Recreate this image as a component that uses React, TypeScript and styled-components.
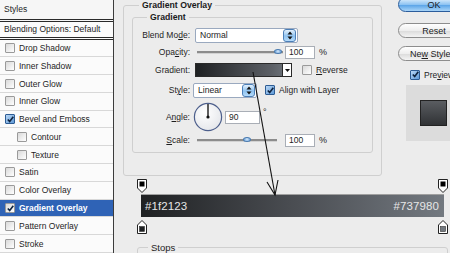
import styled, { createGlobalStyle } from 'styled-components';

const GlobalStyle = createGlobalStyle`
  body {
    margin: 0;
    background: #ececec;
    font-family: "Liberation Sans", Arial, sans-serif;
  }
`;

type Effect = { name: string; checked?: boolean; indent?: boolean; selected?: boolean };

const effects: Effect[] = [
  { name: 'Drop Shadow' },
  { name: 'Inner Shadow' },
  { name: 'Outer Glow' },
  { name: 'Inner Glow' },
  { name: 'Bevel and Emboss', checked: true },
  { name: 'Contour', indent: true },
  { name: 'Texture', indent: true },
  { name: 'Satin' },
  { name: 'Color Overlay' },
  { name: 'Gradient Overlay', checked: true, selected: true },
  { name: 'Pattern Overlay' },
  { name: 'Stroke' },
];

const CheckMark = () => (
  <svg width="7" height="7" viewBox="0 0 7 7">
    <path d="M0.8 3.4 L2.7 5.6 L6.3 0.8" fill="none" stroke="#10243f" strokeWidth="1.6" />
  </svg>
);

const Box = ({ on, blue }: { on?: boolean; blue?: boolean }) => (
  <CheckBox $blue={blue}>{on && <CheckMark />}</CheckBox>
);

const Marker = ({ up, color }: { up?: boolean; color: string }) => (
  <svg width="10" height="14" viewBox="0 0 10 14">
    {up ? (
      <>
        <path d="M0.5 13.5 H9.5 V5 L5 0.5 L0.5 5 Z" fill="#fff" stroke="#222" />
        <rect x="2.5" y="6.5" width="5" height="5" fill={color} stroke="#333" strokeWidth="0.6" />
      </>
    ) : (
      <>
        <path d="M0.5 0.5 H9.5 V9 L5 13.5 L0.5 9 Z" fill="#fff" stroke="#222" />
        <rect x="2.5" y="2.5" width="5" height="5" fill={color} />
      </>
    )}
  </svg>
);

const Spinner = () => (
  <SpinButton>
    <svg width="6" height="9" viewBox="0 0 6 9">
      <path d="M3 0.5 L5.5 3.5 H0.5 Z M3 8.5 L5.5 5.5 H0.5 Z" fill="#111" />
    </svg>
  </SpinButton>
);

function App() {
  return (
    <>
      <GlobalStyle />
      <Page>
        <Sidebar>
          <SideHeader>Styles</SideHeader>
          <BlendRow>Blending Options: Default</BlendRow>
          {effects.map((e) => (
            <EffectRow key={e.name} $selected={e.selected} $indent={e.indent}>
              <Box on={e.checked} blue={e.checked && !e.selected} />
              <span>{e.name}</span>
            </EffectRow>
          ))}
        </Sidebar>

        <Main>
          <TopRow>
            <OuterSet>
              <Legend>Gradient Overlay</Legend>
              <InnerSet>
                <InnerLegend>Gradient</InnerLegend>
                <FieldRow $h={16}>
                  <Label>Blend Mo<u>d</u>e:</Label>
                  <Select $w={103} $ml={1}>
                    <span>Normal</span>
                    <Spinner />
                  </Select>
                </FieldRow>
                <FieldRow $h={18}>
                  <Label>Opa<u>c</u>ity:</Label>
                  <Slider $w={86}>
                    <Thumb $pos={94} />
                  </Slider>
                  <NumberBox $w={30} $ml={2}>100</NumberBox>
                  <Unit>%</Unit>
                </FieldRow>
                <FieldRow $h={18}>
                  <Label>Gradient:</Label>
                  <GradientPicker>
                    <DropArrow>
                      <svg width="5" height="3" viewBox="0 0 5 3">
                        <path d="M0 0 H5 L2.5 3 Z" fill="#111" />
                      </svg>
                    </DropArrow>
                  </GradientPicker>
                  <CheckLabel $ml={10}>
                    <Box />
                    <span><u>R</u>everse</span>
                  </CheckLabel>
                </FieldRow>
                <FieldRow $h={22}>
                  <Label>St<u>y</u>le:</Label>
                  <Select $w={64} $ml={-1}>
                    <span>Linear</span>
                    <Spinner />
                  </Select>
                  <CheckLabel $ml={8}>
                    <Box on blue />
                    <span>Align with Layer</span>
                  </CheckLabel>
                </FieldRow>
                <FieldRow $h={32}>
                  <Label>A<u>n</u>gle:</Label>
                  <Dial>
                    <svg width="30" height="30" viewBox="0 0 30 30">
                      <defs>
                        <radialGradient id="dialfill" cx="0.4" cy="0.35" r="0.7">
                          <stop offset="0" stopColor="#ffffff" />
                          <stop offset="1" stopColor="#e4e6ea" />
                        </radialGradient>
                      </defs>
                      <circle cx="15" cy="15" r="13.6" fill="url(#dialfill)" stroke="#4d5f8c" strokeWidth="1.2" />
                      <line x1="15" y1="15" x2="15" y2="2" stroke="#1a1a1a" strokeWidth="1.4" />
                      <circle cx="15" cy="15" r="1.6" fill="#111" />
                    </svg>
                  </Dial>
                  <NumberBox $w={35} $ml={2}>90</NumberBox>
                  <Degree>°</Degree>
                </FieldRow>
                <FieldRow $h={14}>
                  <Label><u>S</u>cale:</Label>
                  <Slider $w={80}>
                    <Thumb $pos={62} />
                  </Slider>
                  <NumberBox $w={30} $ml={8}>100</NumberBox>
                  <Unit>%</Unit>
                </FieldRow>
              </InnerSet>
            </OuterSet>

            <SideColumn>
              <PillButton $primary>OK</PillButton>
              <PillButton $mt={11}>Reset</PillButton>
              <PillButton $mt={8}>
                <span>Ne<u>w</u> Style...</span>
              </PillButton>
              <PreviewRow>
                <Box on blue />
                <span>Pre<u>v</u>iew</span>
              </PreviewRow>
              <PreviewWell>
                <PreviewSwatch />
              </PreviewWell>
            </SideColumn>
          </TopRow>

          <Editor>
            <MarkerRow>
              <Marker color="#000" />
              <Marker color="#000" />
            </MarkerRow>
            <Strip>
              <span>#1f2123</span>
              <span>#737980</span>
            </Strip>
            <MarkerRow>
              <Marker up color="#1f2123" />
              <Marker up color="#737980" />
            </MarkerRow>
            <StopsSet>
              <StopsLegend>Stops</StopsLegend>
            </StopsSet>
          </Editor>
        </Main>

        <ArrowLayer width="450" height="253" viewBox="0 0 450 253">
          <line x1="253" y1="72" x2="275" y2="195" stroke="#111" strokeWidth="1.1" />
          <polyline points="267,182 275,195 278,180" fill="none" stroke="#111" strokeWidth="1.1" />
        </ArrowLayer>
      </Page>
    </>
  );
}

export default App;

const Page = styled.div`
  position: relative;
  display: flex;
  width: 450px;
  height: 253px;
  overflow: hidden;
  background: #ececec;
  color: #1e1e1e;
  font-size: 8.5px;
`;

const Sidebar = styled.div`
  display: flex;
  flex-direction: column;
  width: 113px;
  flex-shrink: 0;
  background: #fbfbfb;
  border-right: 1px solid #3c3c3c;
`;

const SideHeader = styled.div`
  display: flex;
  align-items: center;
  height: 19px;
  padding-left: 4px;
  background: #f6f6f6;
  border-bottom: 3px double #2a2a2a;
`;

const BlendRow = styled.div`
  display: flex;
  align-items: center;
  height: 15px;
  padding-left: 4px;
  border-bottom: 3px double #2a2a2a;
`;

const EffectRow = styled.div<{ $selected?: boolean; $indent?: boolean }>`
  display: flex;
  align-items: center;
  gap: 4px;
  height: 17px;
  padding-left: ${(p) => (p.$indent ? 17 : 5)}px;
  border-bottom: 1px solid #d8d8d8;
  background: ${(p) => (p.$selected ? '#2f63b6' : 'transparent')};
  color: ${(p) => (p.$selected ? '#fff' : '#1e1e1e')};
  font-weight: ${(p) => (p.$selected ? 700 : 400)};
`;

const CheckBox = styled.span<{ $blue?: boolean }>`
  display: inline-flex;
  align-items: center;
  justify-content: center;
  width: 8px;
  height: 8px;
  flex-shrink: 0;
  border: 1px solid ${(p) => (p.$blue ? '#2d5c94' : '#9a9a9a')};
  border-radius: 1px;
  background: ${(p) =>
    p.$blue
      ? 'linear-gradient(135deg, #b9d7f5, #5f9ad8)'
      : 'linear-gradient(135deg, #d9d9d9, #ffffff)'};
`;

const Main = styled.div`
  display: flex;
  flex-direction: column;
  flex: 1;
  min-width: 0;
`;

const TopRow = styled.div`
  display: flex;
  height: 176px;
  flex-shrink: 0;
`;

const OuterSet = styled.fieldset`
  box-sizing: border-box;
  width: 259px;
  height: 176px;
  flex-shrink: 0;
  min-inline-size: 0;
  margin: 0 0 0 9px;
  padding: 1px 8px 0 8px;
  border: 1px solid #cfcfcf;
  border-radius: 3px;
`;

const Legend = styled.legend`
  margin-left: 7px;
  padding: 0 3px;
  font-weight: 700;
  font-size: 8.7px;
  line-height: 11px;
  color: #1a1a1a;
`;

const InnerSet = styled.fieldset`
  box-sizing: border-box;
  min-inline-size: 0;
  margin: 0;
  padding: 4px 0 5px 0;
  border: 1px solid #cfcfcf;
  border-radius: 3px;
`;

const InnerLegend = styled(Legend)`
  margin-left: 14px;
`;

const FieldRow = styled.div<{ $h: number }>`
  display: flex;
  align-items: center;
  height: ${(p) => p.$h}px;
`;

const Label = styled.div`
  width: 57px;
  margin-right: 4px;
  flex-shrink: 0;
  text-align: right;
  white-space: nowrap;

  u {
    text-decoration-thickness: 1px;
    text-underline-offset: 1px;
  }
`;

const Select = styled.div<{ $w: number; $ml: number }>`
  box-sizing: border-box;
  display: flex;
  align-items: center;
  justify-content: space-between;
  width: ${(p) => p.$w}px;
  height: 15px;
  margin-left: ${(p) => p.$ml}px;
  padding: 0 1px 0 4px;
  background: #fff;
  border: 1px solid #9aa9bf;
  border-radius: 2px;
  font-size: 8.6px;
`;

const SpinButton = styled.span`
  display: flex;
  align-items: center;
  justify-content: center;
  width: 11px;
  height: 11px;
  border: 1px solid #4c7fb8;
  border-radius: 3px;
  background: linear-gradient(#e3f1fd, #8ec2f0 55%, #b5dbfa);
`;

const Slider = styled.div<{ $w: number }>`
  position: relative;
  width: ${(p) => p.$w}px;
  height: 2px;
  margin-left: 3px;
  flex-shrink: 0;
  background: #8c8c8c;
  border-bottom: 1px solid #d2d2d2;
`;

const Thumb = styled.span<{ $pos: number }>`
  position: absolute;
  top: -2px;
  left: ${(p) => p.$pos}%;
  width: 8px;
  height: 5px;
  margin-left: -4px;
  border-radius: 50%;
  background: radial-gradient(circle at 50% 35%, #d8ebfc, #5b95d2);
  border: 1px solid #4a7bb0;
  box-sizing: border-box;
`;

const NumberBox = styled.div<{ $w: number; $ml: number }>`
  box-sizing: border-box;
  display: flex;
  align-items: center;
  width: ${(p) => p.$w}px;
  height: 13px;
  margin-left: ${(p) => p.$ml}px;
  padding-left: 3px;
  flex-shrink: 0;
  background: #fff;
  border: 1px solid #a9aeb6;
`;

const Unit = styled.span`
  margin-left: 4px;
  font-size: 9px;
`;

const Degree = styled.span`
  align-self: flex-start;
  margin: 6px 0 0 3px;
  font-size: 9px;
`;

const GradientPicker = styled.div`
  box-sizing: border-box;
  display: flex;
  justify-content: flex-end;
  width: 97px;
  height: 14px;
  margin-left: 1px;
  flex-shrink: 0;
  border: 1px solid #2a2a2a;
  background: linear-gradient(to right, #1f2123, #5c6066 80%, #737980);
`;

const DropArrow = styled.span`
  display: flex;
  align-items: center;
  justify-content: center;
  width: 8px;
  background: #fff;
  border-left: 1px solid #2a2a2a;
`;

const CheckLabel = styled.label<{ $ml: number }>`
  display: flex;
  align-items: center;
  gap: 4px;
  margin-left: ${(p) => p.$ml}px;
  white-space: nowrap;
`;

const Dial = styled.div`
  display: flex;
  width: 30px;
  height: 30px;
  flex-shrink: 0;
  margin-left: -1px;
`;

const SideColumn = styled.div`
  display: flex;
  flex-direction: column;
  width: 72px;
  flex-shrink: 0;
  margin-left: 16px;
`;

const PillButton = styled.div<{ $primary?: boolean; $mt?: number }>`
  box-sizing: border-box;
  display: flex;
  align-items: center;
  justify-content: center;
  height: 15px;
  margin-top: ${(p) => p.$mt ?? -3}px;
  border: 1px solid ${(p) => (p.$primary ? '#2b5d9c' : '#8d8d8d')};
  border-radius: 8px;
  background: ${(p) =>
    p.$primary
      ? 'linear-gradient(#e6f3fd, #8fc4f2 50%, #5aa4e8 55%, #a9d5f8)'
      : 'linear-gradient(#ffffff, #eeeeee 50%, #dcdcdc 55%, #f4f4f4)'};
  font-size: 9px;
  white-space: nowrap;
`;

const PreviewRow = styled.label`
  display: flex;
  align-items: center;
  gap: 4px;
  height: 11px;
  margin: 8px 0 0 12px;
  font-size: 8.5px;
`;

const PreviewWell = styled.div`
  display: flex;
  width: 60px;
  height: 56px;
  margin: 5px 0 0 8px;
  padding: 15px 0 0 14px;
  box-sizing: border-box;
  background: #dcdcdc;
`;

const PreviewSwatch = styled.div`
  width: 27px;
  height: 26px;
  box-sizing: border-box;
  border: 1px solid #222;
  background: linear-gradient(#5a5d61, #303235);
`;

const Editor = styled.div`
  display: flex;
  flex-direction: column;
  width: 311px;
  margin-left: 23px;
  flex-shrink: 0;
`;

const MarkerRow = styled.div`
  display: flex;
  justify-content: space-between;
  height: 14px;
  margin-top: 3px;
`;

const Strip = styled.div`
  box-sizing: border-box;
  display: flex;
  align-items: center;
  justify-content: space-between;
  height: 23px;
  margin: 1px 4px 0 4px;
  padding: 0 5px 0 4px;
  border-top: 1px solid #a0a0a0;
  background: linear-gradient(to right, #1f2123, #4a4d52 50%, #737980);
  color: #e6e6e6;
  font-size: 11.5px;
  letter-spacing: 0.1px;
`;

const StopsSet = styled.fieldset`
  box-sizing: border-box;
  min-inline-size: 0;
  height: 30px;
  margin: 8px 0 0 0;
  padding: 0;
  border: 1px solid #cfcfcf;
  border-radius: 3px;
`;

const StopsLegend = styled.legend`
  margin-left: 10px;
  padding: 0 3px;
  font-size: 9.5px;
  line-height: 11px;
`;

const ArrowLayer = styled.svg`
  position: absolute;
  top: 0;
  left: 0;
  pointer-events: none;
`;
